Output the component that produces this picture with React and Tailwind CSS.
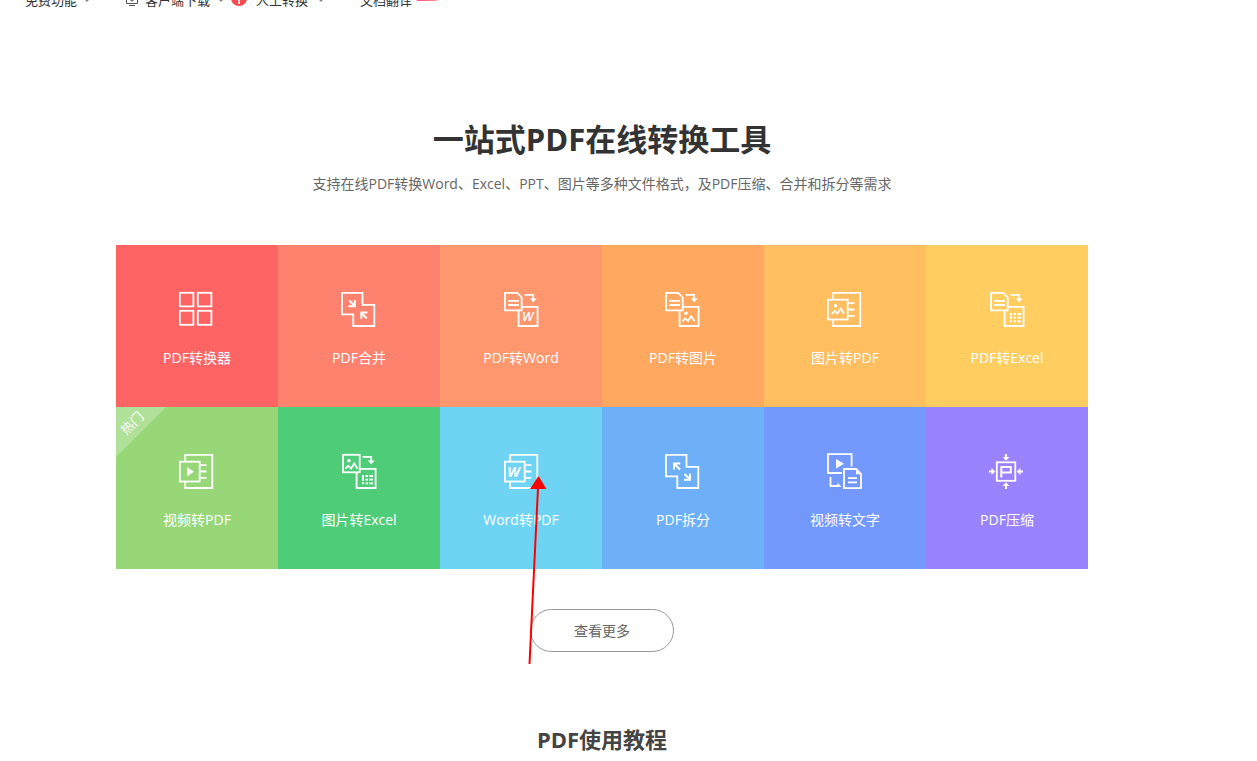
const stroke = { fill: 'none', stroke: 'currentColor', strokeWidth: 1.8 };

function Picture({ x = 0, y = 0 }) {
  return (
    <g transform={`translate(${x} ${y})`}>
      <circle cx="4" cy="1.5" r="1.8" fill="currentColor" />
      <path d="M0.5 9.5L3.2 6.5L6 9.3L9.3 4.3L12.5 9.5" {...stroke} />
    </g>
  );
}

function Sheet() {
  return (
    <g {...stroke}>
      <path d="M1 1.8H13.2L17.7 6.5V19.3H1Z" />
      <path d="M4.2 9.8H15M4.2 14H15" />
    </g>
  );
}

function TurnArrow() {
  return (
    <>
      <path d="M20.5 3.8H29.2V9" {...stroke} />
      <path d="M25.7 7.5H32.7L29.2 11.3Z" fill="currentColor" />
    </>
  );
}

function TableRows() {
  return (
    <g {...stroke}>
      <path d="M21 22V28M21 29.3V31.3" />
      <path d="M23.5 23H26M27 23H31M23.5 26.7H26M27 26.7H31M23.5 30.4H26M27 30.4H31" />
    </g>
  );
}

function Frame({ children }) {
  return (
    <>
      <g {...stroke}>
        <path d="M6.2 8.5V1.8H33.3V35H6.2V29" />
        <rect x="0.9" y="8.7" width="19.8" height="19.8" />
        <path d="M21 12.2H27.5M21 18.5H27.5M21 24.8H27.5" />
      </g>
      {children}
    </>
  );
}

const steps = 'M1 1.8H21.5V13.8H33.3V35H12.3V23.3H1Z';
const lowerBox = <path d="M18 15.8H33.6V35H14.6V20" {...stroke} />;

const icons = {
  grid: (
    <g {...stroke}>
      <rect x="0.8" y="1.8" width="13.6" height="13.6" />
      <rect x="18.8" y="1.8" width="13.6" height="13.6" />
      <rect x="0.8" y="19.8" width="13.6" height="14" />
      <rect x="18.8" y="19.8" width="13.6" height="14" />
    </g>
  ),
  merge: (
    <g {...stroke}>
      <path d={steps} />
      <path strokeWidth="2" d="M8.3 9.5L14 15.2M13.8 9V15.3H7.5M25.8 27.5L20.5 22M20.3 28V21.5H26.5" />
    </g>
  ),
  split: (
    <g {...stroke}>
      <path d={steps} />
      <path strokeWidth="2" d="M9.3 10.8L15 16.5M9 16.5V10.5H15.3M19.5 21L25 26.5M25 20.5V26.8H19" />
    </g>
  ),
  toWord: (
    <g transform="translate(1 0)">
      <Sheet />
      <TurnArrow />
      {lowerBox}
      <text x="18" y="30.3" fill="currentColor" className="font-['Open_Sans',sans-serif] text-[13px] font-semibold italic">W</text>
    </g>
  ),
  toPicture: (
    <>
      <Sheet />
      <TurnArrow />
      {lowerBox}
      <Picture x={17} y={20.8} />
    </>
  ),
  toExcel: (
    <g transform="translate(1 0)">
      <Sheet />
      <TurnArrow />
      {lowerBox}
      <TableRows />
    </g>
  ),
  pictureToPdf: (
    <Frame>
      <Picture x={4.5} y={13.3} />
    </Frame>
  ),
  videoToPdf: (
    <Frame>
      <path d="M8 14L15 18.7L8 23.5Z" fill="currentColor" />
    </Frame>
  ),
  wordToPdf: (
    <g transform="translate(1 0)">
      <Frame>
        <text x="3.3" y="23.7" fill="currentColor" className="font-['Open_Sans',sans-serif] text-[14px] font-bold italic">W</text>
      </Frame>
    </g>
  ),
  pictureToExcel: (
    <g transform="translate(1 0)">
      <rect x="1" y="1.8" width="16.7" height="17.5" {...stroke} />
      <Picture x={3} y={6.2} />
      <TurnArrow />
      {lowerBox}
      <TableRows />
    </g>
  ),
  videoToText: (
    <>
      <path d="M15 20H1V1.2H24.6V13.5" {...stroke} />
      <path d="M9 6L17 10.7L9 15.5Z" fill="currentColor" />
      <g {...stroke}>
        <path d="M17 16H29.3L34 21V35.1H17Z" />
        <path d="M21 25.2H30M21 29.3H30M3.5 24V33H12" />
      </g>
      <path d="M29 15.5V21.3H34.8ZM10.5 29.8L14.5 33.8H10.5Z" fill="currentColor" />
    </>
  ),
  compress: (
    <>
      <g {...stroke}>
        <rect x="7.8" y="9.3" width="18.5" height="18.5" />
        <path strokeWidth="2" d="M12.3 24.5V14H21.8V19.6H13" />
        <path strokeWidth="2" d="M17 1V5M17 36V32M0 18.5H3.5M34 18.5H31" />
      </g>
      <path
        d="M13.5 4H20.5L17 7.8ZM13.5 33H20.5L17 29.2ZM2.5 15V22L6.3 18.5ZM31.5 15V22L27.7 18.5Z"
        fill="currentColor"
      />
    </>
  ),
};

const tools = [
  { name: 'PDF转换器', icon: 'grid', bg: 'bg-[#ff6464]' },
  { name: 'PDF合并', icon: 'merge', bg: 'bg-[#ff826e]' },
  { name: 'PDF转Word', icon: 'toWord', bg: 'bg-[#ff976e]' },
  { name: 'PDF转图片', icon: 'toPicture', bg: 'bg-[#ffa860]' },
  { name: '图片转PDF', icon: 'pictureToPdf', bg: 'bg-[#ffbe60]' },
  { name: 'PDF转Excel', icon: 'toExcel', bg: 'bg-[#ffcd60]' },
  { name: '视频转PDF', icon: 'videoToPdf', bg: 'bg-[#97d777]', hot: true },
  { name: '图片转Excel', icon: 'pictureToExcel', bg: 'bg-[#4fcc78]' },
  { name: 'Word转PDF', icon: 'wordToPdf', bg: 'bg-[#6fd4f4]' },
  { name: 'PDF拆分', icon: 'split', bg: 'bg-[#6eb0f7]' },
  { name: '视频转文字', icon: 'videoToText', bg: 'bg-[#7399ff]' },
  { name: 'PDF压缩', icon: 'compress', bg: 'bg-[#9983ff]' },
];

function Chevron() {
  return (
    <svg className="w-2 h-2" viewBox="0 0 8 8" fill="none" stroke="#888" strokeWidth="1.3">
      <path d="M1 2L4 5L7 2" />
    </svg>
  );
}

function Nav() {
  return (
    <nav className="-mt-[10px] h-5 pl-[25px] flex items-center text-[13px] leading-5 text-[#333]">
      <a href="#free" className="flex items-center gap-[6px]">
        免费功能
        <Chevron />
      </a>
      <a href="#client" className="ml-[35px] flex items-center gap-[7px]">
        <svg className="w-3 h-3" viewBox="0 0 12 12" fill="none" stroke="#555">
          <path d="M0.5 0.5H11.5V9.5H0.5ZM6 2V7M4 5.5L6 7.5L8 5.5M3 11.5H9" />
        </svg>
        <span>客户端下载</span>
        <Chevron />
      </a>
      <a href="#manual" className="ml-[6px] flex items-center gap-[9px]">
        <svg className="w-4 h-4 -mt-1" viewBox="0 0 16 16">
          <circle cx="8" cy="8" r="8" fill="#f94a50" />
          <path d="M8 9V14" stroke="#fff" strokeWidth="1.5" />
        </svg>
        人工转换
        <Chevron />
      </a>
      <a href="#translate" className="ml-[35px] flex items-center gap-[3px]">
        文档翻译
        <span className="w-6 h-4 -mt-[14px] rounded-sm bg-linear-to-r from-[#f8407c] to-[#ff9a90]" />
      </a>
    </nav>
  );
}

function ToolTile({ tool }) {
  return (
    <a href="#tool" className={`relative overflow-hidden aspect-square pt-[46px] flex flex-col items-center text-white ${tool.bg}`}>
      {tool.hot && (
        <span className="absolute left-0 top-0 w-[50px] h-[50px] bg-white/25 [clip-path:polygon(0_0,100%_0,0_100%)]">
          <span className="absolute left-0 top-[6px] w-8 text-center text-[13px] leading-5 -rotate-45">热门</span>
        </span>
      )}
      <svg className="w-9 h-9 shrink-0" viewBox="0 0 36 36">{icons[tool.icon]}</svg>
      <span className="mt-[21px] text-[14px] leading-5">{tool.name}</span>
    </a>
  );
}

export default function App() {
  return (
    <div className="relative min-h-screen overflow-hidden bg-white font-['Open_Sans','Noto_Sans_CJK_SC',sans-serif]">
      <Nav />
      <main className="pr-[53px] pt-[105px] flex flex-col items-center">
        <h1 className="text-[31px] leading-12 font-bold text-[#333]">一站式PDF在线转换工具</h1>
        <p className="mt-[11px] text-[14px] leading-5 text-[#666]">
          支持在线PDF转换Word、Excel、PPT、图片等多种文件格式，及PDF压缩、合并和拆分等需求
        </p>
        <div className="mt-[51px] w-full max-w-[972px] grid grid-cols-6">
          {tools.map(t => <ToolTile key={t.name} tool={t} />)}
        </div>
        <button className="mt-10 px-[43px] h-[43px] border border-[#999] rounded-full text-[14px] leading-5 text-[#666]">
          查看更多
        </button>
        <h2 className="mt-[71px] text-[22px] leading-8 font-bold text-[#444]">PDF使用教程</h2>
      </main>
      <svg className="absolute left-[526px] top-[474px] w-6 h-48 pointer-events-none" viewBox="0 0 24 192">
        <path d="M3.5 190L12 14" stroke="#f00" strokeWidth="2" />
        <path d="M12.5 2L20.5 15H4Z" fill="#f00" />
      </svg>
    </div>
  );
}
